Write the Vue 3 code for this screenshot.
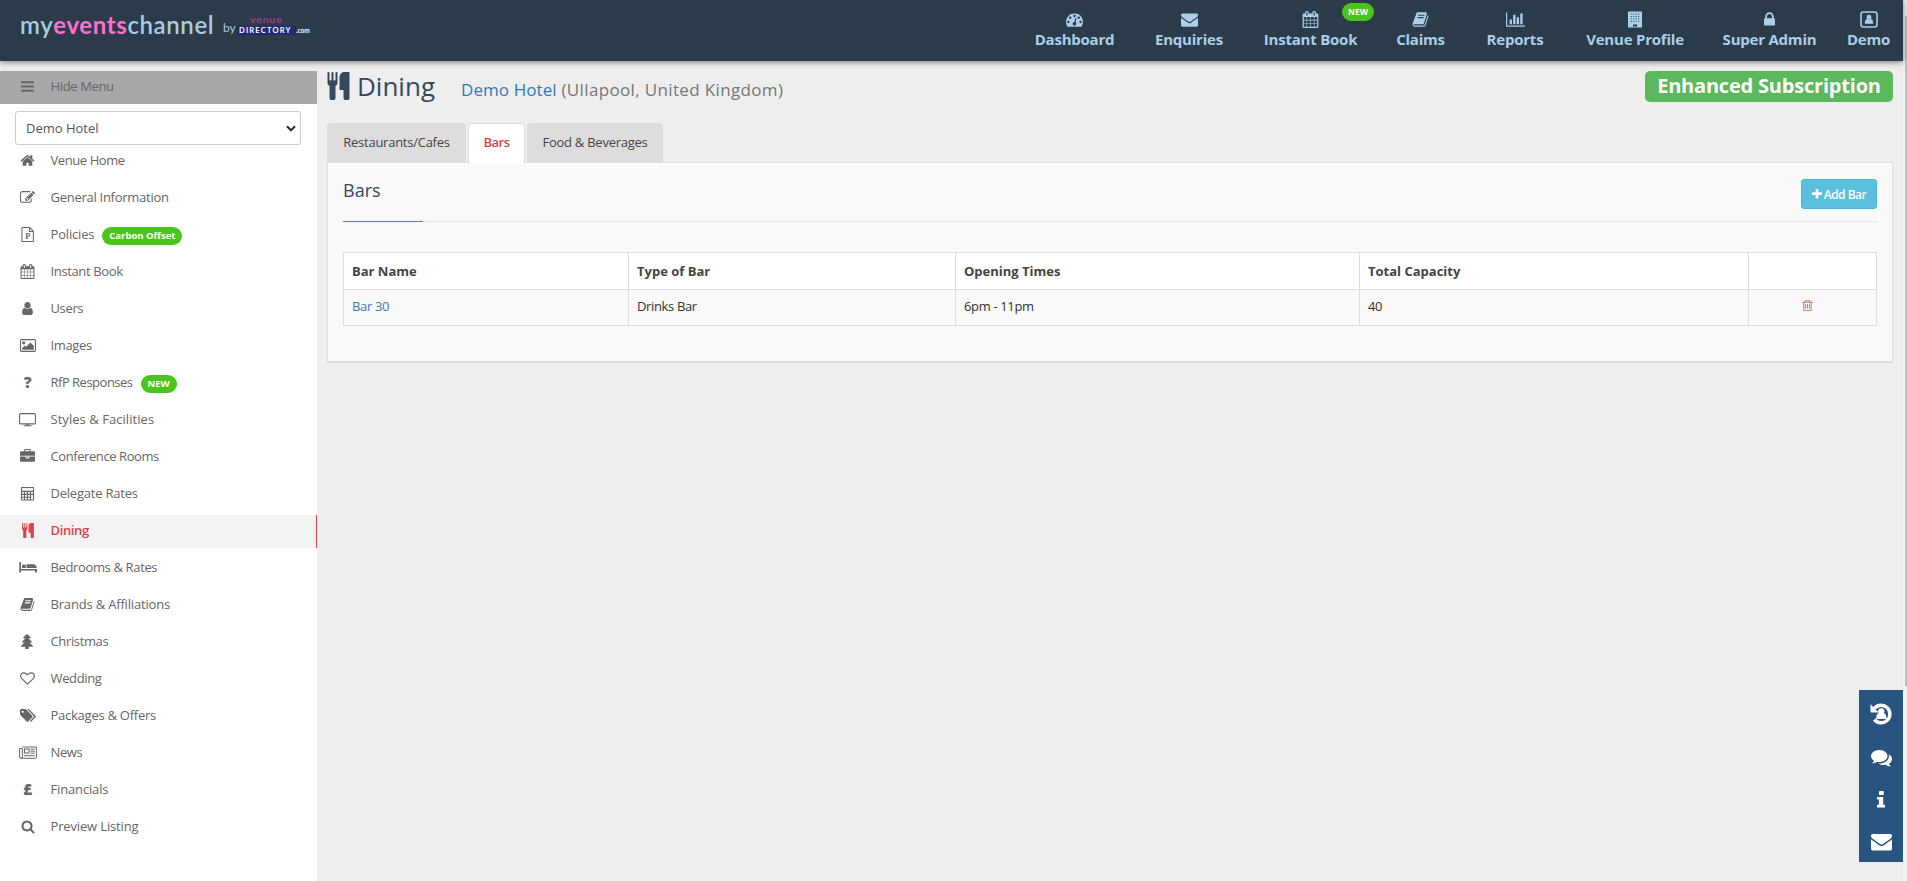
<template>
  <div class="page">
    <div class="viewport">
      <header class="topbar">
        <div class="brand">
          <span class="brand-name">my<b>events</b>channel</span>
          <span class="brand-by">by</span>
          <span class="brand-vd">
            <span class="vd-venue">venue</span>
            <span class="vd-row"><span class="vd-dir">DIRECTORY</span><span class="vd-com">.com</span></span>
          </span>
        </div>
        <nav class="topnav">
          <a v-for="n in topNav" :key="n.label" class="topnav-item" :style="{ width: n.width + 'px' }">
            <svg class="topnav-icon" :viewBox="icons[n.icon].box" :style="{ width: n.iw + 'px' }" v-html="icons[n.icon].body"></svg>
            <span>{{ n.label }}</span>
            <span v-if="n.badge" class="pill topnav-pill">{{ n.badge }}</span>
          </a>
        </nav>
      </header>

      <div class="body">
        <aside class="sidebar">
          <div class="side-item side-toggle">
            <span class="side-icon"><svg class="bars-icon" :viewBox="icons.bars.box" v-html="icons.bars.body"></svg></span>
            <span>Hide Menu</span>
          </div>
          <div class="venue-select">
            <span>Demo Hotel</span>
            <svg viewBox="0 0 10 7" class="chevron"><path d="M1 1.2l4 4 4-4" fill="none" stroke="currentColor" stroke-width="2.2" /></svg>
          </div>
          <ul class="side-list">
            <li v-for="s in sideNav" :key="s.label" class="side-item" :class="{ active: s.active }">
              <span class="side-icon">
                <span v-if="s.glyph" class="glyph">{{ s.glyph }}</span>
                <svg v-else :viewBox="icons[s.icon].box" :style="{ width: s.iw + 'px' }" v-html="icons[s.icon].body"></svg>
              </span>
              <span class="side-label" :style="{ letterSpacing: (s.ls ?? -0.36) + 'px' }">{{ s.label }}</span>
              <span v-if="s.badge" class="pill">{{ s.badge }}</span>
            </li>
          </ul>
        </aside>

        <main class="main">
          <div class="title-row">
            <svg class="title-icon" :viewBox="icons.cutlery.box" v-html="icons.cutlery.body"></svg>
            <h1>Dining</h1>
            <p class="venue"><a>Demo Hotel</a> (Ullapool, United Kingdom)</p>
            <span class="subscription">Enhanced Subscription</span>
          </div>

          <div class="tabs">
            <a class="tab tab-restaurants">Restaurants/Cafes</a>
            <a class="tab tab-bars active">Bars</a>
            <a class="tab tab-food">Food &amp; Beverages</a>
          </div>

          <section class="panel">
            <div class="panel-head">
              <h2>Bars</h2>
              <button class="add-btn">
                <svg :viewBox="icons.plus.box" v-html="icons.plus.body"></svg>
                <span>Add Bar</span>
              </button>
            </div>
            <table>
              <colgroup>
                <col class="c-name" /><col class="c-type" /><col class="c-time" /><col class="c-cap" /><col />
              </colgroup>
              <thead>
                <tr>
                  <th>Bar Name</th>
                  <th>Type of Bar</th>
                  <th>Opening Times</th>
                  <th>Total Capacity</th>
                  <th></th>
                </tr>
              </thead>
              <tbody>
                <tr v-for="b in bars" :key="b.name">
                  <td><a>{{ b.name }}</a></td>
                  <td>{{ b.type }}</td>
                  <td>{{ b.times }}</td>
                  <td>{{ b.capacity }}</td>
                  <td class="actions"><svg :viewBox="icons.trash.box" v-html="icons.trash.body"></svg></td>
                </tr>
              </tbody>
            </table>
          </section>
        </main>
      </div>
    </div>

    <div class="scrollbar"><div class="thumb"></div></div>

    <div class="dock">
      <svg class="d-history" :viewBox="icons.history.box" v-html="icons.history.body"></svg>
      <svg class="d-comments" :viewBox="icons.comments.box" v-html="icons.comments.body"></svg>
      <svg class="d-info" :viewBox="icons.info.box" v-html="icons.info.body"></svg>
      <svg class="d-mail" :viewBox="icons.envelope.box" v-html="icons.envelope.body"></svg>
    </div>
  </div>
</template>

<script setup>
const p = (d, box = '0 0 1792 1792') => ({ box, body: `<path fill="currentColor" d="${d}"/>` })

const icons = {
  bars: p('M1664 1344v128q0 26-19 45t-45 19h-1408q-26 0-45-19t-19-45v-128q0-26 19-45t45-19h1408q26 0 45 19t19 45zm0-512v128q0 26-19 45t-45 19h-1408q-26 0-45-19t-19-45v-128q0-26 19-45t45-19h1408q26 0 45 19t19 45zm0-512v128q0 26-19 45t-45 19h-1408q-26 0-45-19t-19-45v-128q0-26 19-45t45-19h1408q26 0 45 19t19 45z'),
  home: p('M1472 992v480q0 26-19 45t-45 19h-384v-384h-256v384h-384q-26 0-45-19t-19-45v-480q0-1 .5-3t.5-3l575-474 575 474q1 2 1 6zm223-69l-62 74q-8 9-21 11h-3q-13 0-21-7l-692-577-692 577q-12 8-24 7-13-2-21-11l-62-74q-8-10-7-23.5t11-21.5l719-599q32-26 76-26t76 26l244 204v-195q0-14 9-23t23-9h192q14 0 23 9t9 23v408l219 182q10 8 11 21.5t-7 23.5z'),
  edit: p('M888 1184l116-116-152-152-116 116v56h96v96h56zm440-720q-16-16-33 1l-350 350q-17 17-1 33t33-1l350-350q17-17 1-33zm80 594v190q0 119-84.5 203.5t-203.5 84.5h-832q-119 0-203.5-84.5t-84.5-203.5v-832q0-119 84.5-203.5t203.5-84.5h832q63 0 117 25 15 7 18 23 3 17-9 29l-49 49q-14 14-32 8-23-6-45-6h-832q-66 0-113 47t-47 113v832q0 66 47 113t113 47h832q66 0 113-47t47-113v-126q0-13 9-22l64-64q15-15 35-7t20 29zm-96-738l288 288-672 672h-288v-288zm444 132l-92 92-288-288 92-92q28-28 68-28t68 28l152 152q28 28 28 68t-28 68z'),
  file: {
    box: '0 0 14 16',
    body: '<path fill="none" stroke="currentColor" stroke-width="1.1" d="M.8 1.2q0-.6.6-.6H9l4 4v10.200q0 .6-.6.6h-11q-.6 0-.6-.6zM8.800.8v4h4"/><text x="6.900" y="12.800" font-size="9" font-weight="700" font-family="Liberation Serif, serif" text-anchor="middle" fill="currentColor">P</text>'
  },
  calendar: p('M192 1664h288v-288h-288v288zm352 0h320v-288h-320v288zm-352-352h288v-320h-288v320zm352 0h320v-320h-320v320zm-352-384h288v-288h-288v288zm736 736h320v-288h-320v288zm-384-736h320v-288h-320v288zm768 736h288v-288h-288v288zm-384-352h320v-320h-320v320zm-352-864v-288q0-13-9.500-22.500t-22.500-9.500h-64q-13 0-22.500 9.500t-9.500 22.500v288q0 13 9.500 22.500t22.500 9.500h64q13 0 22.500-9.500t9.500-22.500zm736 864h288v-320h-288v320zm-384-384h320v-288h-320v288zm384 0h288v-288h-288v288zm32-480v-288q0-13-9.500-22.500t-22.500-9.500h-64q-13 0-22.500 9.500t-9.500 22.500v288q0 13 9.500 22.500t22.500 9.500h64q13 0 22.500-9.500t9.500-22.500zm384-64v1280q0 52-38 90t-90 38h-1408q-52 0-90-38t-38-90v-1280q0-52 38-90t90-38h128v-96q0-66 47-113t113-47h64q66 0 113 47t47 113v96h384v-96q0-66 47-113t113-47h64q66 0 113 47t47 113v96h128q52 0 90 38t38 90z'),
  user: p('M1536 1399q0 109-62.500 187t-150.500 78h-854q-88 0-150.500-78t-62.500-187q0-85 8.500-160.500t31.500-152 58.500-131 94-89 134.500-34.500q131 128 313 128t313-128q76 0 134.500 34.500t94 89 58.500 131 31.500 152 8.500 160.500zm-256-887q0 159-112.500 271.500t-271.500 112.500-271.500-112.500-112.500-271.500 112.500-271.500 271.500-112.500 271.500 112.500 112.500 271.500z'),
  image: p('M576 576q0 80-56 136t-136 56-136-56-56-136 56-136 136-56 136 56 56 136zm1024 384v448h-1408v-192l320-320 160 160 512-512zm96-704h-1600q-13 0-22.500 9.500t-9.500 22.500v1216q0 13 9.500 22.500t22.500 9.500h1600q13 0 22.500-9.500t9.500-22.500v-1216q0-13-9.500-22.500t-22.500-9.500zm160 32v1216q0 66-47 113t-113 47h-1600q-66 0-113-47t-47-113v-1216q0-66 47-113t113-47h1600q66 0 113 47t47 113z', '-64 0 1920 1792'),
  desktop: {
    box: '0 0 17 14',
    body: '<rect x=".6" y="1.100" width="15.800" height="10.300" rx="1" fill="none" stroke="currentColor" stroke-width="1.100"/><path fill="currentColor" d="M7.500 11.500h2v1.200h3v1h-8v-1h3z"/>'
  },
  briefcase: p('M640 256h512v-128h-512v128zm1152 640v480q0 66-47 113t-113 47h-1472q-66 0-113-47t-47-113v-480h672v160q0 26 19 45t45 19h320q26 0 45-19t19-45v-160h672zm-768 0v128h-256v-128h256zm768-480v384h-1792v-384q0-66 47-113t113-47h352v-160q0-40 28-68t68-28h576q40 0 68 28t28 68v160h352q66 0 113 47t47 113z'),
  calculator: {
    box: '0 0 15 16',
    body: '<path fill="currentColor" fill-rule="evenodd" d="M1.200 1h12.600q.7 0 .7.7v13q0 .7-.7.7H1.200q-.7 0-.7-.7v-13q0-.7.7-.7zM1.700 2v3h11.600V2zM1.700 6.400v1.900h2V6.400zm3.200 0v1.900h2V6.400zm3.200 0v1.900h2V6.400zm3.200 0v1.900h2V6.400zM1.700 9.500v1.900h2V9.500zm3.200 0v1.900h2V9.500zm3.200 0v1.900h2V9.500zM1.700 12.500v1.800h2v-1.800zm3.200 0v1.800h2v-1.800zm3.200 0v1.800h2v-1.800zM11.300 9.500v4.800h2V9.500z"/>'
  },
  cutlery: p('M832 64v640q0 61-35.500 111t-92.500 70v779q0 52-38 90t-90 38h-128q-52 0-90-38t-38-90v-779q-57-20-92.500-70t-35.500-111v-640q0-26 19-45t45-19 45 19 19 45v416q0 26 19 45t45 19 45-19 19-45v-416q0-26 19-45t45-19 45 19 19 45v416q0 26 19 45t45 19 45-19 19-45v-416q0-26 19-45t45-19 45 19 19 45zm768 0v1600q0 52-38 90t-90 38h-128q-52 0-90-38t-38-90v-512h-224q-13 0-22.500-9.500t-9.500-22.500v-800q0-132 94-226t226-94h256q26 0 45 19t19 45z', '192 0 1408 1792'),
  bed: {
    box: '0 0 18 12',
    body: '<path fill="currentColor" d="M.9.500h.5q.6 0 .6.600v6.300h16V11h-1.900V9H2v2H.3V1.100q0-.6.6-.6zM3 4.600a1.900 1.900 0 1 1 3.800 0V6.600H3zM7.500 2.700h6.700q3.400.3 3.500 3.900H7.500z"/>'
  },
  book: p('M1703 478q40 57 18 129l-275 906q-19 64-76.500 107.500t-122.500 43.500h-923q-77 0-148.500-53.500t-99.500-131.500q-24-67-2-127 0-4 3-27t4-37q1-8-3-21.500t-3-19.500q2-11 8-21t16.500-23.500 16.500-23.500q23-38 45-91.500t30-91.500q3-10 .5-30t-.5-28q3-11 17-28t17-23q21-36 42-92t25-90q1-9-2.500-32t.5-28q4-13 22-30.500t22-22.500q19-26 42.500-84.500t27.500-96.500q1-8-3-25.500t-2-26.500q2-8 9-18t18-23 17-21q8-12 16.500-30.500t15-35 16-36 19.500-32 26.500-23.500 36-11.500 47.500 5.500l-1 3q38-9 51-9h761q74 0 114 56t18 130l-274 906q-36 119-71.500 153.500t-128.500 34.500h-869q-27 0-38 15-11 16-1 43 24 70 144 70h923q29 0 56-15.500t35-41.500l300-987q7-22 5-57 38 15 59 43zm-1064 2q-4 13 2 22.500t20 9.500h608q13 0 25.500-9.500t16.500-22.500l21-64q4-13-2-22.500t-20-9.500h-608q-13 0-25.500 9.500t-16.500 22.500zm-83 256q-4 13 2 22.500t20 9.500h608q13 0 25.500-9.500t16.500-22.500l21-64q4-13-2-22.500t-20-9.500h-608q-13 0-25.500 9.500t-16.500 22.500z'),
  tree: p('M1504 1472q0 26-19 45t-45 19h-462q1 17 6 87.500t5 108.500q0 25-18 42.500t-43 17.500h-320q-25 0-43-17.500t-18-42.500q0-38 5-108.500t6-87.500h-462q-26 0-45-19t-19-45 19-45l402-403h-229q-26 0-45-19t-19-45 19-45l402-403h-197q-26 0-45-19t-19-45 19-45l384-384q19-19 45-19t45 19l384 384q19 19 19 45t-19 45-45 19h-197l402 403q19 19 19 45t-19 45-45 19h-229l402 403q19 19 19 45z', '-64 0 1792 1792'),
  heart: {
    box: '0 0 16 14',
    body: '<path fill="none" stroke="currentColor" stroke-width="1.200" stroke-linejoin="round" d="M8 12.900L2.200 7.300Q.7 5.700.7 4.200.8 1 4.200 1 6 1 8 3.200 10 1 11.800 1q3.400 0 3.500 3.200 0 1.500-1.500 3.100z"/>'
  },
  tags: p('M448 448q0-53-37.500-90.500t-90.500-37.500-90.500 37.500-37.500 90.500 37.500 90.500 90.500 37.500 90.500-37.500 37.500-90.500zm1067 576q0 53-37 90l-491 492q-39 37-91 37-53 0-90-37l-715-716q-38-37-64.500-101t-26.500-117v-416q0-52 38-90t90-38h416q53 0 117 26.500t102 64.500l715 714q37 39 37 91zm384 0q0 53-37 90l-491 492q-39 37-91 37-36 0-59-14t-53-45l470-470q37-37 37-90 0-52-37-91l-715-714q-38-38-102-64.500t-117-26.500h224q53 0 117 26.500t102 64.500l715 714q37 39 37 91z', '0 0 1920 1792'),
  news: {
    box: '0 0 18 13',
    body: '<path fill="none" stroke="currentColor" stroke-width="1" d="M3.400 1h14v10.400q0 .9-.9.900H2Q.600 12.300.600 11V2.500h2.800V11q0 1.300-1.400 1.300"/><rect x="5.500" y="3" width="4.500" height="4" fill="none" stroke="currentColor" stroke-width="1.100"/><path stroke="currentColor" d="M11.500 3.200h4.200M11.500 5.200h4.200M11.500 7.200h4.200M5 9.700h10.700"/>'
  },
  search: p('M1216 832q0-185-131.500-316.500t-316.500-131.500-316.500 131.500-131.500 316.500 131.500 316.500 316.500 131.500 316.500-131.500 131.500-316.500zm512 832q0 52-38 90t-90 38q-54 0-90-38l-343-342q-179 124-399 124-143 0-273.500-55.500t-225-150-150-225-55.500-273.500 55.500-273.500 150-225 225-150 273.500-55.500 273.500 55.500 225 150 150 225 55.500 273.500q0 220-124 399l343 343q37 37 37 90z'),
  dashboard: p('M384 1152q0-53-37.500-90.500t-90.500-37.500-90.500 37.500-37.500 90.500 37.500 90.500 90.500 37.500 90.500-37.500 37.500-90.500zm192-448q0-53-37.500-90.500t-90.500-37.500-90.500 37.500-37.500 90.500 37.500 90.500 90.500 37.500 90.500-37.500 37.500-90.500zm428 481l101-382q6-26-7.500-48.500t-38.500-29.500-48 6.500-30 39.500l-101 382q-60 5-107 43.500t-63 98.500q-20 77 20 146t117 89 146-20 89-117q16-60-6-117t-72-91zm660-33q0-53-37.500-90.500t-90.500-37.500-90.500 37.500-37.500 90.500 37.500 90.500 90.500 37.500 90.500-37.500 37.500-90.500zm-640-640q0-53-37.500-90.500t-90.500-37.500-90.500 37.500-37.500 90.500 37.500 90.500 90.500 37.500 90.500-37.500 37.500-90.500zm448 192q0-53-37.500-90.500t-90.500-37.500-90.500 37.500-37.500 90.500 37.500 90.500 90.500 37.500 90.500-37.500 37.500-90.500zm320 448q0 261-141 483-19 29-54 29h-1402q-35 0-54-29-141-221-141-483 0-182 71-348t191-286 286-191 348-71 348 71 286 191 191 286 71 348z'),
  envelope: p('M1792 710v794q0 66-47 113t-113 47h-1472q-66 0-113-47t-47-113v-794q44 49 101 87 362 246 497 345 57 42 92.500 65.500t94.500 48 110 24.500h2q51 0 110-24.500t94.500-48 92.500-65.500q170-123 498-345 57-39 100-87zm0-294q0 79-49 151t-122 123q-376 261-468 325-10 7-42.500 31t-54 38.500-52 32.500-57.500 27-50 9h-2q-23 0-50-9t-57.500-27-52-32.500-54-38.500-42.500-31q-91-64-262-182.500t-205-142.500q-62-42-117-115.500t-55-136.500q0-78 41.500-130t118.500-52h1472q65 0 112.500 47t47.500 113z'),
  chart: p('M640 896v512h-256v-512h256zm384-512v1024h-256v-1024h256zm1024 1152v128h-2048v-1536h128v1408h1920zm-640-896v768h-256v-768h256zm384-384v1152h-256v-1152h256z', '0 0 2048 1792'),
  building: {
    box: '0 0 14 16',
    body: '<path fill="currentColor" fill-rule="evenodd" d="M.6 0h12.800q.6 0 .6.600v14.800q0 .6-.6.600H.6q-.6 0-.6-.6V.600Q0 0 .600 0zM5 13v2h4v-2z"/><path stroke="#2c3b4a" stroke-width=".8" stroke-dasharray="1.200 1.200" d="M2.800 2.600h9M2.800 5h9M2.800 7.400h9M2.800 9.800h9"/>'
  },
  lock: p('M640 768h512v-192q0-106-75-181t-181-75-181 75-75 181v192zm832 96v576q0 40-28 68t-68 28h-960q-40 0-68-28t-28-68v-576q0-40 28-68t68-28h32v-192q0-184 132-316t316-132 316 132 132 316v192h32q40 0 68 28t28 68z'),
  profile: {
    box: '0 0 18 17',
    body: '<rect x="1" y="1" width="16" height="15" rx="2.500" fill="none" stroke="currentColor" stroke-width="1.600"/><circle cx="9" cy="6.200" r="2.400" fill="currentColor"/><path fill="currentColor" d="M4.800 12.800q0-4.800 2.700-4.800 1.500 1.200 3 0 2.700 0 2.700 4.800z"/>'
  },
  plus: p('M1600 736v192q0 40-28 68t-68 28h-416v416q0 40-28 68t-68 28h-192q-40 0-68-28t-28-68v-416h-416q-40 0-68-28t-28-68v-192q0-40 28-68t68-28h416v-416q0-40 28-68t68-28h192q40 0 68 28t28 68v416h416q40 0 68 28t28 68z', '192 192 1408 1408'),
  trash: p('M704 736v576q0 14-9 23t-23 9h-64q-14 0-23-9t-9-23v-576q0-14 9-23t23-9h64q14 0 23 9t9 23zm256 0v576q0 14-9 23t-23 9h-64q-14 0-23-9t-9-23v-576q0-14 9-23t23-9h64q14 0 23 9t9 23zm256 0v576q0 14-9 23t-23 9h-64q-14 0-23-9t-9-23v-576q0-14 9-23t23-9h64q14 0 23 9t9 23zm128 724v-948h-896v948q0 22 7 40.500t14.500 27 10.500 8.500h832q3 0 10.500-8.500t14.500-27 7-40.500zm-672-1076h448l-48-117q-7-9-17-11h-317q-10 2-17 11zm928 32v64q0 14-9 23t-23 9h-96v948q0 83-47 143.500t-113 60.500h-832q-66 0-113-58.500t-47-141.500v-952h-96q-14 0-23-9t-9-23v-64q0-14 9-23t23-9h309l70-167q15-37 54-63t79-26h320q40 0 79 26t54 63l70 167h309q14 0 23 9t9 23z'),
  history: {
    box: '0 0 22 22',
    body: '<path fill="none" stroke="currentColor" stroke-width="3.400" d="M4.500 5.200A8.800 8.800 0 1 1 4.300 16.600"/><path fill="currentColor" d="M.5 1.200v7.600q0 .7.700.7h7.600z"/><circle cx="11.300" cy="8.300" r="3.100" fill="currentColor"/><path fill="currentColor" d="M6.200 16q-.3-5.600 3-6 2.100 1.100 4.200 0 3.300.4 3 6z"/>'
  },
  comments: p('M1408 768q0 139-94 257t-256.500 186.500-353.500 68.500q-86 0-176-16-124 88-278 128-36 9-86 16h-3q-11 0-20.500-8t-11.500-21q-1-3-1-6.500t.5-6.500 2-6l2.500-5 3.500-5.500 4-5 4.500-5 4-4.500q5-6 23-25t26-29.500 22.500-29 25-38.500 20.500-44q-124-72-195-177t-71-224q0-139 94-257t256.500-186.500 353.500-68.500 353.500 68.500 256.500 186.500 94 257zm384 256q0 120-71 224.500t-195 176.500q10 24 20.500 44t25 38.500 22.500 29 26 29.500 23 25q1 1 4 4.500t4.500 5 4 5 3.500 5.500l2.500 5 2 6 .5 6.500-1 6.500q-3 14-13 22t-22 7q-50-7-86-16-154-40-278-128-90 16-176 16-271 0-472-132 58 4 88 4 161 0 309-45t264-129q125-92 192-212t67-254q0-77-23-152 129 71 204 178t75 230z'),
  info: {
    box: '0 0 8 17',
    body: '<rect x="2" y="0" width="4.800" height="4" rx=".6" fill="currentColor"/><path fill="currentColor" d="M.6 6h5.600v7.700h1.200q.6 0 .6.600V16q0 .600-.6.600H.6Q0 16.600 0 16v-1.700q0-.6.600-.6h1.300V8.600H.6Q0 8.600 0 8V6.600Q0 6 .600 6z"/>'
  }
}

const topNav = [
  { label: 'Dashboard', icon: 'dashboard', iw: 17, width: 117 },
  { label: 'Enquiries', icon: 'envelope', iw: 17, width: 112 },
  { label: 'Instant Book', icon: 'calendar', iw: 17, width: 131, badge: 'NEW' },
  { label: 'Claims', icon: 'book', iw: 17, width: 89 },
  { label: 'Reports', icon: 'chart', iw: 19, width: 100 },
  { label: 'Venue Profile', icon: 'building', iw: 14, width: 140 },
  { label: 'Super Admin', icon: 'lock', iw: 17, width: 129 },
  { label: 'Demo', icon: 'profile', iw: 18, width: 69 }
]

const sideNav = [
  { label: 'Venue Home', icon: 'home', iw: 15, ls: -0.42 },
  { label: 'General Information', icon: 'edit', iw: 15, ls: -0.27 },
  { label: 'Policies', icon: 'file', iw: 13.5, badge: 'Carbon Offset', ls: -0.18 },
  { label: 'Instant Book', icon: 'calendar', iw: 15 },
  { label: 'Users', icon: 'user', iw: 15 },
  { label: 'Images', icon: 'image', iw: 16 },
  { label: 'RfP Responses', glyph: '?', badge: 'NEW', ls: -0.5 },
  { label: 'Styles & Facilities', icon: 'desktop', iw: 17, ls: 0.05 },
  { label: 'Conference Rooms', icon: 'briefcase', iw: 15, ls: -0.42 },
  { label: 'Delegate Rates', icon: 'calculator', iw: 15, ls: -0.22 },
  { label: 'Dining', icon: 'cutlery', iw: 12, active: true },
  { label: 'Bedrooms & Rates', icon: 'bed', iw: 18 },
  { label: 'Brands & Affiliations', icon: 'book', iw: 15, ls: -0.18 },
  { label: 'Christmas', icon: 'tree', iw: 15 },
  { label: 'Wedding', icon: 'heart', iw: 15 },
  { label: 'Packages & Offers', icon: 'tags', iw: 16, ls: -0.25 },
  { label: 'News', icon: 'news', iw: 18 },
  { label: 'Financials', glyph: '£', ls: -0.15 },
  { label: 'Preview Listing', icon: 'search', iw: 14, ls: -0.15 }
]

const bars = [{ name: 'Bar 30', type: 'Drinks Bar', times: '6pm - 11pm', capacity: 40 }]
</script>

<style>
body {
  margin: 0;
  background: #eee;
  overflow: hidden;
}
</style>

<style scoped>
.page {
  position: relative;
  display: flex;
  width: 1907px;
  height: 881px;
  overflow: hidden;
  background: #eee;
  font-family: "Trebuchet MS", "Open Sans", "Noto Sans", sans-serif;
  font-size: 13px;
  color: #333;
}

.page svg { display: block; flex-shrink: 0; }

.viewport {
  display: flex;
  flex-direction: column;
  flex-shrink: 0;
  width: 1903px;
}

.topbar {
  display: flex;
  justify-content: space-between;
  height: 61px;
  flex-shrink: 0;
  background: #2c3b4a;
  box-shadow: 0 1px 6px rgba(0, 0, 0, 0.5);
  z-index: 1;
}

.brand {
  display: flex;
  padding: 10px 0 0 20px;
  color: #a9cce3;
  white-space: nowrap;
}

.brand-name {
  font: 600 24px/29px Lato, sans-serif;
  letter-spacing: 0.6px;
  width: 202px;
}

.brand-name b { color: #ff6fcf; font-weight: 700; }

.brand-by {
  font: 12px/16px Lato, sans-serif;
  padding: 10px 0 0 1px;
  width: 14px;
}

.brand-vd {
  display: flex;
  flex-direction: column;
  padding-top: 5px;
}

.vd-venue {
  font: 9.5px/9px "DejaVu Sans", sans-serif;
  color: #c2409f;
  letter-spacing: 0.6px;
  padding-left: 13px;
}

.vd-row { display: flex; align-items: center; margin-top: 2px; }

.vd-dir {
  background: #27277a;
  color: #fff;
  font: 700 7.5px/9px Lato, sans-serif;
  letter-spacing: 1.2px;
  width: 57px;
  padding-left: 2px;
}

.vd-com { color: #fff; font: 700 6.5px/9px Lato, sans-serif; }

.topnav { display: flex; }

.topnav-item {
  position: relative;
  display: flex;
  flex-direction: column;
  align-items: center;
  padding-top: 11px;
  color: #a9cfe9;
  font-size: 15px;
  font-weight: 700;
  line-height: 22px;
  letter-spacing: -0.22px;
  white-space: nowrap;
}

.topnav-icon { height: 17px; }

.pill {
  border-radius: 10px;
  background: #4bc41c;
  color: #fff;
  font-size: 9.5px;
  font-weight: 700;
  line-height: 18px;
  height: 18px;
  padding: 0 7px;
  letter-spacing: 0;
}

.topnav-pill {
  position: absolute;
  top: 3px;
  left: 97px;
  width: 32px;
  padding: 0;
  text-align: center;
  font-size: 8.5px;
}

.body { display: flex; flex: 1; }

.sidebar {
  width: 317px;
  flex-shrink: 0;
  margin-top: 10px;
  background: #fff;
}

.side-list { list-style: none; margin: 0; padding: 0; }

.side-item {
  display: flex;
  align-items: center;
  height: 33px;
  margin-bottom: 4px;
  box-sizing: border-box;
  color: #666;
  line-height: 18px;
  letter-spacing: -0.36px;
  padding-bottom: 3px;
}

.side-icon {
  display: flex;
  justify-content: center;
  width: 24px;
  margin: 1px 11px 0 15.5px;
}

.side-icon svg { height: 15px; }

.bars-icon { width: 15px; }

.glyph { font-weight: 800; font-size: 15px; line-height: 15px; }

.side-toggle {
  background: #a8a8a8;
  margin-bottom: 7px;
}

.venue-select {
  display: flex;
  align-items: center;
  justify-content: space-between;
  width: 286px;
  height: 34px;
  margin-left: 15px;
  padding: 0 4px 0 10px;
  box-sizing: border-box;
  border: 1px solid #ccc;
  border-radius: 3px;
  color: #555;
  letter-spacing: 0;
}

.chevron { width: 10px; color: #333; }

.side-item .pill { margin: 4px 0 0 8px; }

.side-item.active {
  background: #f3f3f3;
  border-right: 1px solid #d9434a;
  color: #d9434a;
}

.side-item.active .side-label { font-weight: 600; }

.main {
  flex: 1;
  min-width: 0;
  padding: 10px 10px 0;
}

.title-row { display: flex; height: 52px; }

.title-icon { width: 23px; height: 28px; margin-top: 1px; color: #34495e; }

h1 {
  margin: 0 0 0 7px;
  width: 104px;
  font-size: 26px;
  font-weight: 400;
  line-height: 31px;
  color: #34495e;
}

.venue {
  flex: 1;
  margin: 6px 0 0;
  font-size: 17px;
  line-height: 26px;
  letter-spacing: 0.35px;
  color: #777;
}

.venue a { letter-spacing: 0.08px; }

.venue a, td a { color: #337ab7; }

.subscription {
  width: 248px;
  height: 31px;
  border-radius: 5px;
  background: #5cb85c;
  color: #fff;
  font-size: 20px;
  font-weight: 700;
  line-height: 29px;
  letter-spacing: -0.2px;
  text-align: center;
}

.tabs { display: flex; height: 39px; }

.tab {
  height: 39px;
  box-sizing: border-box;
  border-radius: 4px 4px 0 0;
  background: #ddd;
  color: #444;
  line-height: 38px;
  letter-spacing: -0.25px;
  text-align: center;
}

.tab-restaurants { width: 139px; }
.tab-bars { width: 57px; margin: 0 2px; }
.tab-food { width: 136px; }

.tab.active {
  height: 41px;
  position: relative;
  border: 1px solid #ddd;
  border-bottom: 0;
  background: #fff;
  color: #d9434a;
  font-weight: 600;
  line-height: 36px;
  letter-spacing: -0.5px;
}

.panel {
  height: 200px;
  box-sizing: border-box;
  padding: 16px 15px 0;
  border: 1px solid #ddd;
  background: #f9f9f9;
  box-shadow: inset 0 1px #fff, 0 1px 1px rgba(0, 0, 0, 0.08);
}

.panel-head {
  display: flex;
  justify-content: space-between;
  height: 42px;
  border-bottom: 1px solid #e5e5e5;
}

/* short accent over the divider */
.panel-head::after {
  content: "";
  position: absolute;
  width: 80px;
  height: 1px;
  margin-top: 42px;
  background: #5c80ab;
}

h2 {
  margin: 0;
  font-size: 18px;
  font-weight: 400;
  line-height: 23px;
  color: #34495e;
}

.add-btn {
  display: flex;
  align-items: center;
  justify-content: center;
  gap: 2px;
  width: 76px;
  height: 30px;
  padding: 0;
  border: 1px solid #46b8da;
  border-radius: 3px;
  background: #5bc0de;
  color: #fff;
  font: 600 12px "Trebuchet MS", "Open Sans", sans-serif;
  letter-spacing: -0.5px;
}

.add-btn svg { width: 10px; height: 10px; }

table {
  width: 1534px;
  margin-top: 30px;
  border-collapse: collapse;
  table-layout: fixed;
}

.c-name { width: 285px; }
.c-type { width: 327px; }
.c-time { width: 404px; }
.c-cap { width: 389px; }

th, td {
  height: 36px;
  padding: 0 8px;
  box-sizing: border-box;
  border: 1px solid #ddd;
  text-align: left;
  color: #333;
}

th { height: 37px; background: #fff; color: #444; }

td { padding-bottom: 4px; letter-spacing: -0.35px; }

.actions svg { width: 13px; height: 13px; margin: 0 auto; transform: translateX(-5px); color: #d9635f; }

.scrollbar { width: 4px; flex-shrink: 0; background: #f1f1f1; }

.thumb {
  width: 2px;
  height: 670px;
  margin: 16px 0 0 2px;
  background: #c1c1c1;
}

.dock {
  position: absolute;
  right: 4px;
  bottom: 19px;
  display: flex;
  flex-direction: column;
  align-items: center;
  width: 44px;
  height: 172px;
  background: #2a5480;
  color: #fff;
  z-index: 2;
}

.d-history { width: 22px; height: 22px; margin-top: 13px; }
.d-comments { width: 21px; height: 21px; margin-top: 22px; }
.d-info { width: 8px; height: 17px; margin-top: 23px; }
.d-mail { width: 21px; height: 21px; margin-top: 23px; }
</style>
